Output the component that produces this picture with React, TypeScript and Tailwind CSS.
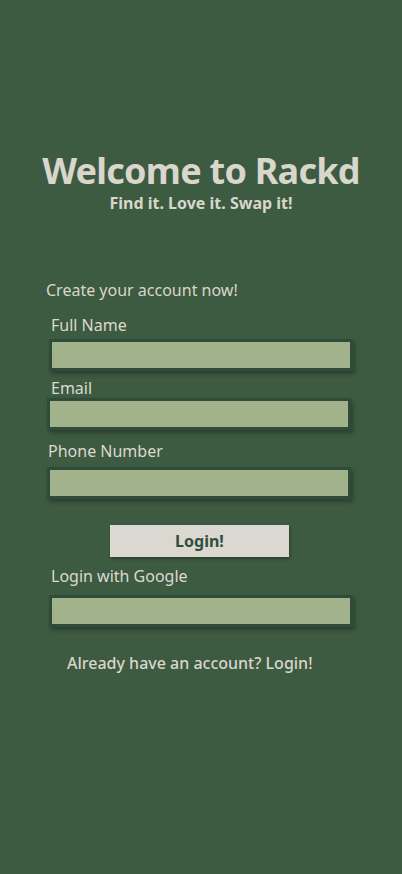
import React from "react";

const Field = ({ label, labelClass, inputClass }: { label: string; labelClass: string; inputClass: string }) => {
  return (
    <div className="flex flex-col">
      <label className={`text-[16px] leading-5 text-[#dcd9cf] ${labelClass}`}>{label}</label>
      <input
        type="text"
        className={`h-[32px] w-[304px] border-[3px] border-[#2f4b3b] bg-[#a2b38b] shadow-[2px_3px_4px_rgba(0,0,0,0.3)] outline-none ${inputClass}`}
      />
    </div>
  );
};

const App = () => {
  return (
    <div
      className="min-h-[874px] w-full bg-[#3d5b41] text-[#d9d6cc]"
      style={{ fontFamily: '"Noto Sans", "Open Sans", sans-serif' }}
    >
      <div className="flex flex-col pt-[149px]">
        <h1 className="text-center text-[36px] font-bold leading-[44px] tracking-[-0.75px]">Welcome to Rackd</h1>
        <p className="text-center text-[16px] font-bold leading-5">Find it. Love it. Swap it!</p>

        <p className="ml-[46px] mt-[67px] text-[16px] leading-5">Create your account now!</p>

        <div className="mt-[15px]">
          <Field label="Full Name" labelClass="ml-[51px] mb-[4px]" inputClass="ml-[49px]" />
        </div>
        <div className="mt-[7px]">
          <Field label="Email" labelClass="ml-[51px]" inputClass="ml-[47px]" />
        </div>
        <div className="mt-[11px]">
          <Field label="Phone Number" labelClass="ml-[48px] mb-[6px]" inputClass="ml-[47px]" />
        </div>

        <button className="ml-[110px] mt-[26px] h-[32px] w-[179px] bg-[#dad8d0] text-[16px] font-bold text-[#2f4f3e] shadow-[1px_2px_3px_rgba(0,0,0,0.3)]">
          Login!
        </button>

        <div className="mt-[9px]">
          <Field label="Login with Google" labelClass="ml-[51px] mb-[9px]" inputClass="ml-[49px]" />
        </div>

        <p className="ml-[67px] mt-[26px] text-[16px] font-medium leading-5">Already have an account? Login!</p>
      </div>
    </div>
  );
};

export default App;
